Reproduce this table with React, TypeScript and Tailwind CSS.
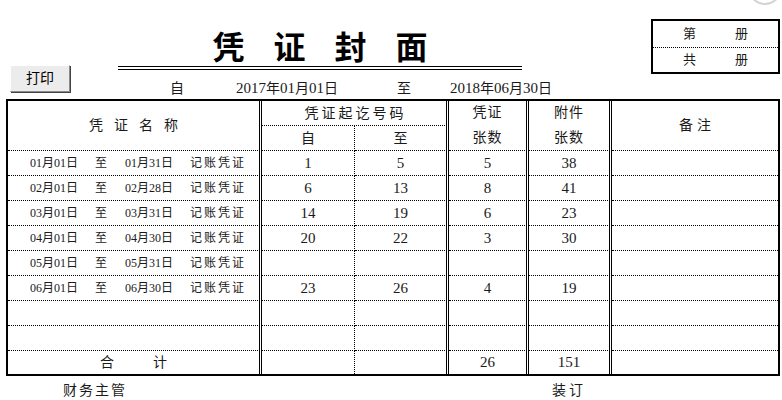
import React from 'react';

const F = "font-['Liberation_Serif','Noto_Sans_CJK_SC',serif]";

function Mixed({ text, d, c }: { text: string; d: string; c: string }) {
  const parts = text.match(/(\d+|[^\d]+)/g) || [];
  return (
    <span className="whitespace-nowrap">
      {parts.map((p, i) =>
        /\d/.test(p) ? (
          <span key={i} className={d}>{p}</span>
        ) : (
          <span key={i} className={c}>{p}</span>
        )
      )}
    </span>
  );
}

const rows: string[][] = [
  ['01月01日', '01月31日', '1', '5', '5', '38'],
  ['02月01日', '02月28日', '6', '13', '8', '41'],
  ['03月01日', '03月31日', '14', '19', '6', '23'],
  ['04月01日', '04月30日', '20', '22', '3', '30'],
  ['05月01日', '05月31日', '', '', '', ''],
  ['06月01日', '06月30日', '23', '26', '4', '19'],
  ['', '', '', '', '', ''],
  ['', '', '', '', '', ''],
];

const cell = 'border-dotted border-black flex items-center justify-center';
const dotB = 'border-b';
const dotR = 'border-r';
const dblR = 'border-r-[3px] [border-right-style:double]!';

export default function App() {
  return (
    <div className={`relative w-[782px] h-[400px] bg-white text-[#1a1a1a] overflow-hidden ${F}`}>
      {/* faint circle top-right */}
      <div className="absolute left-[748px] top-[-29px] w-[34px] h-[34px] rounded-full border-2 border-[#d4d4d4]" />

      {/* top area */}
      <div className="flex h-[99px]">
        <div className="w-[118px] shrink-0">
          <button className="ml-[10px] mt-[65px] w-[60px] h-[27px] bg-[#ececec] border border-t-white border-l-white border-r-[#8a8a8a] border-b-[#8a8a8a] shadow-[1px_1px_0_#444] flex items-center justify-center text-[14px] leading-none text-black">
            打印
          </button>
        </div>
        <div className="w-[533px] shrink-0 flex flex-col">
          <div className="w-[404px] h-[66px] pt-[29px] flex justify-center gap-[29px] text-[32px] leading-[32px] font-bold text-black font-['Noto_Sans_CJK_SC',serif]">
            <span>凭</span>
            <span>证</span>
            <span>封</span>
            <span>面</span>
          </div>
          <div className="w-[404px] h-[4px] border-t border-b border-black" />
          <div className="mt-[8px] h-[20px] flex items-center pl-[52px]">
            <span className="w-[66px] text-[14px]">自</span>
            <span className="w-[161px]">
              <Mixed text="2017年01月01日" d="text-[15px]" c="text-[14px]" />
            </span>
            <span className="w-[53px] text-[14px]">至</span>
            <span>
              <Mixed text="2018年06月30日" d="text-[15px]" c="text-[14px]" />
            </span>
          </div>
        </div>
        <div className="mt-[19px] w-[129px] h-[55px] border-2 border-black flex flex-col text-[13px]">
          <div className="h-[27px] border-b border-dotted border-black flex items-center">
            <span className="ml-[30px] w-[13px]">第</span>
            <span className="ml-[39px]">册</span>
          </div>
          <div className="flex-1 flex items-center">
            <span className="ml-[30px] w-[13px]">共</span>
            <span className="ml-[39px]">册</span>
          </div>
        </div>
      </div>

      {/* table */}
      <div className="ml-[6px] w-[774px] border-2 border-black grid grid-cols-[254px_93px_94px_80px_83px_166px] grid-rows-[repeat(10,25px)_23px] text-[14px]">
        {/* header */}
        <div className={`${cell} ${dotB} ${dblR} row-span-2 gap-[11px]`}>
          <span>凭</span>
          <span>证</span>
          <span>名</span>
          <span>称</span>
        </div>
        <div className={`${cell} ${dotB} ${dblR} col-span-2 tracking-[3px] pl-[3px]`}>凭证起讫号码</div>
        <div className={`${cell} ${dotB} ${dblR} row-span-2 flex-col gap-[7px] tracking-[1px] leading-[18px]`}>
          <span>凭证</span>
          <span>张数</span>
        </div>
        <div className={`${cell} ${dotB} ${dblR} row-span-2 flex-col gap-[7px] tracking-[1px] leading-[18px]`}>
          <span>附件</span>
          <span>张数</span>
        </div>
        <div className={`${cell} ${dotB} row-span-2 tracking-[4px] pl-[4px]`}>备注</div>
        <div className={`${cell} ${dotB} ${dotR}`}>自</div>
        <div className={`${cell} ${dotB} ${dblR}`}>至</div>

        {rows.map((r, i) => (
          <React.Fragment key={i}>
            <div className={`${cell} ${dotB} ${dblR} justify-start! pl-[22px] text-[12px]`}>
              {r[0] && (
                <>
                  <span className="w-[65px]">
                    <Mixed text={r[0]} d="text-[12px]" c="text-[12px]" />
                  </span>
                  <span className="w-[30px]">至</span>
                  <span className="w-[65px]">
                    <Mixed text={r[1]} d="text-[12px]" c="text-[12px]" />
                  </span>
                  <span className="tracking-[2px]">记账凭证</span>
                </>
              )}
            </div>
            <div className={`${cell} ${dotB} ${dotR} text-[15px]`}>{r[2]}</div>
            <div className={`${cell} ${dotB} ${dblR} text-[15px]`}>{r[3]}</div>
            <div className={`${cell} ${dotB} ${dblR} text-[15px]`}>{r[4]}</div>
            <div className={`${cell} ${dotB} ${dblR} text-[15px]`}>{r[5]}</div>
            <div className={`${cell} ${dotB}`} />
          </React.Fragment>
        ))}

        {/* total row */}
        <div className={`${cell} ${dblR} justify-start! pl-[92px]`}>
          <span className="w-[53px]">合</span>
          <span>计</span>
        </div>
        <div className={`${cell} ${dotR}`} />
        <div className={`${cell} ${dblR}`} />
        <div className={`${cell} ${dblR} text-[15px]`}>26</div>
        <div className={`${cell} ${dblR} text-[15px]`}>151</div>
        <div className={`${cell}`} />
      </div>

      {/* footer */}
      <div className="h-[24px] pt-[4px] flex items-center text-[14px]">
        <span className="ml-[63px] w-[489px] tracking-[2px]">财务主管</span>
        <span className="tracking-[3px]">装订</span>
      </div>
    </div>
  );
}
